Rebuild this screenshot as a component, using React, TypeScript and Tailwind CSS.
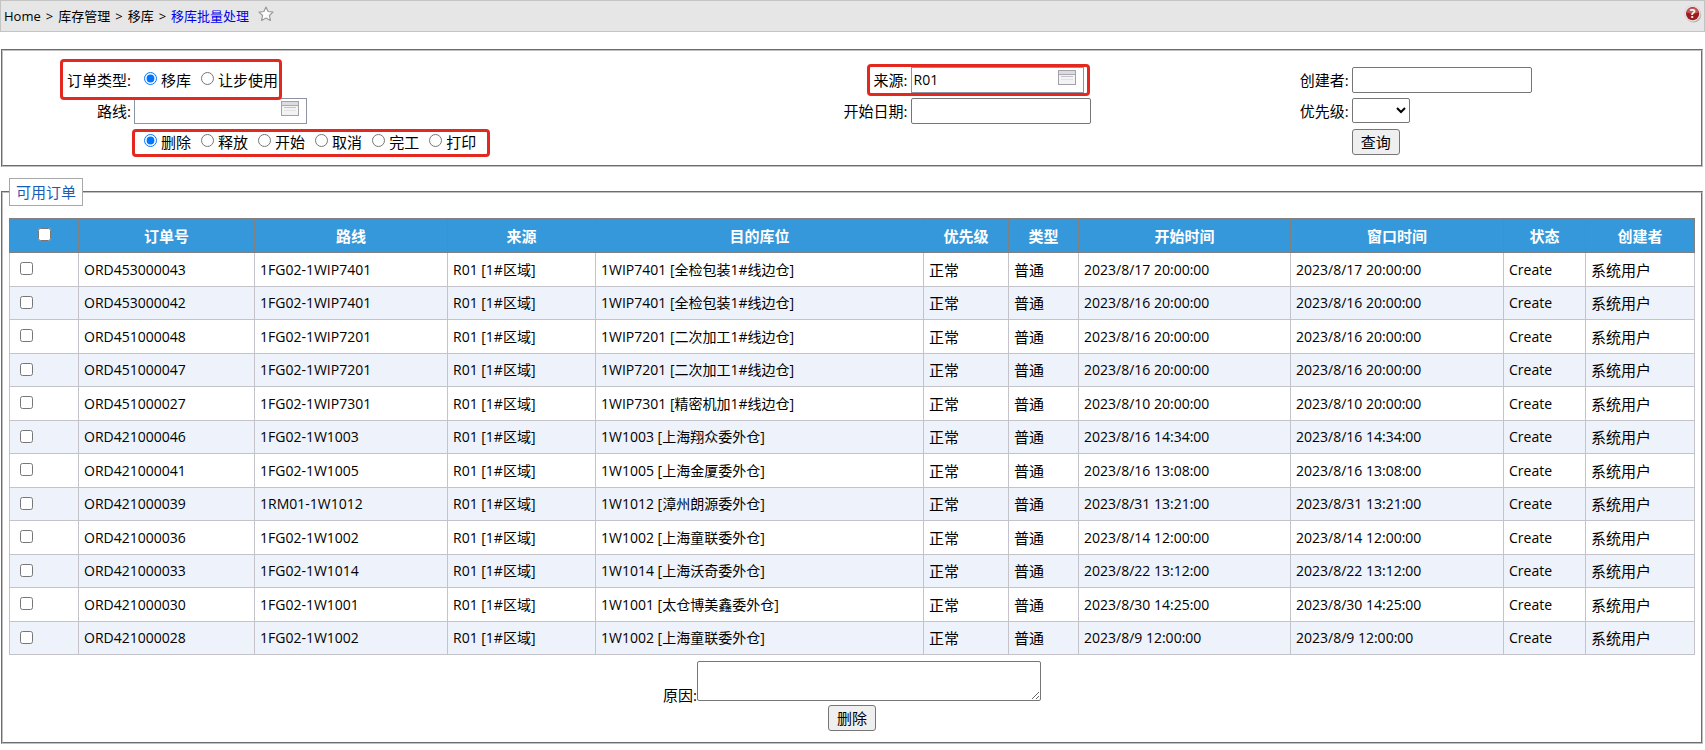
import React, { useState } from 'react';

interface Order {
  no: string;
  route: string;
  target: string;
  start: string;
  window: string;
}

const source = 'R01 [1#区域]';

const orders: Order[] = [
  { no: 'ORD453000043', route: '1FG02-1WIP7401', target: '1WIP7401 [全检包装1#线边仓]', start: '2023/8/17 20:00:00', window: '2023/8/17 20:00:00' },
  { no: 'ORD453000042', route: '1FG02-1WIP7401', target: '1WIP7401 [全检包装1#线边仓]', start: '2023/8/16 20:00:00', window: '2023/8/16 20:00:00' },
  { no: 'ORD451000048', route: '1FG02-1WIP7201', target: '1WIP7201 [二次加工1#线边仓]', start: '2023/8/16 20:00:00', window: '2023/8/16 20:00:00' },
  { no: 'ORD451000047', route: '1FG02-1WIP7201', target: '1WIP7201 [二次加工1#线边仓]', start: '2023/8/16 20:00:00', window: '2023/8/16 20:00:00' },
  { no: 'ORD451000027', route: '1FG02-1WIP7301', target: '1WIP7301 [精密机加1#线边仓]', start: '2023/8/10 20:00:00', window: '2023/8/10 20:00:00' },
  { no: 'ORD421000046', route: '1FG02-1W1003', target: '1W1003 [上海翔众委外仓]', start: '2023/8/16 14:34:00', window: '2023/8/16 14:34:00' },
  { no: 'ORD421000041', route: '1FG02-1W1005', target: '1W1005 [上海金厦委外仓]', start: '2023/8/16 13:08:00', window: '2023/8/16 13:08:00' },
  { no: 'ORD421000039', route: '1RM01-1W1012', target: '1W1012 [漳州朗源委外仓]', start: '2023/8/31 13:21:00', window: '2023/8/31 13:21:00' },
  { no: 'ORD421000036', route: '1FG02-1W1002', target: '1W1002 [上海童联委外仓]', start: '2023/8/14 12:00:00', window: '2023/8/14 12:00:00' },
  { no: 'ORD421000033', route: '1FG02-1W1014', target: '1W1014 [上海沃奇委外仓]', start: '2023/8/22 13:12:00', window: '2023/8/22 13:12:00' },
  { no: 'ORD421000030', route: '1FG02-1W1001', target: '1W1001 [太仓博美鑫委外仓]', start: '2023/8/30 14:25:00', window: '2023/8/30 14:25:00' },
  { no: 'ORD421000028', route: '1FG02-1W1002', target: '1W1002 [上海童联委外仓]', start: '2023/8/9 12:00:00', window: '2023/8/9 12:00:00' },
];

// The target column has no width and takes what is left
const columns = [
  { title: '订单号', width: 'w-[176px]' },
  { title: '路线', width: 'w-[193px]' },
  { title: '来源', width: 'w-[148px]' },
  { title: '目的库位', width: '' },
  { title: '优先级', width: 'w-[85px]' },
  { title: '类型', width: 'w-[70px]' },
  { title: '开始时间', width: 'w-[212px]' },
  { title: '窗口时间', width: 'w-[213px]' },
  { title: '状态', width: 'w-[82px]' },
  { title: '创建者', width: 'w-[109px]' },
];

const actions = ['删除', '释放', '开始', '取消', '完工', '打印'];

const inputClass = 'h-[26px] w-[180px] rounded-[2px] border border-[#767676] bg-white px-1 outline-none';
const buttonClass = 'rounded-[3px] border border-[#767676] bg-[#efefef] px-2 text-[15px] leading-6';
const labelClass = 'text-right text-[15px] whitespace-nowrap';
const cellClass = 'border border-[#c3c3c9] px-[5px]';

const StarIcon: React.FC = () => (
  <svg width="16" height="16" viewBox="0 0 16 16" aria-hidden="true">
    <path
      d="M8 1 L10.1 5.5 L15 6.1 L11.4 9.5 L12.4 14.5 L8 12 L3.6 14.5 L4.6 9.5 L1 6.1 L5.9 5.5 Z"
      fill="#fdfdfd"
      stroke="#9a9a9a"
      strokeWidth="1.2"
      strokeLinejoin="round"
    />
  </svg>
);

const HelpIcon: React.FC = () => (
  <svg width="18" height="18" viewBox="0 0 18 18" aria-hidden="true">
    <circle cx="9.6" cy="9.8" r="7.6" fill="#b5b5b5" />
    <circle cx="8.6" cy="8.6" r="7.8" fill="#f3eded" stroke="#c9c4c4" strokeWidth="0.6" />
    <circle cx="8.6" cy="8.6" r="6.6" fill="#9d1c20" />
    <path d="M2.6 7.6 A6.1 6.1 0 0 1 14.6 7.6 Q8.6 9.8 2.6 7.6 Z" fill="#c2555a" />
    <text x="8.6" y="13" textAnchor="middle" fontSize="12" fontWeight="700" fill="#fff">
      ?
    </text>
  </svg>
);

const PickerIcon: React.FC = () => (
  <svg width="18" height="15" viewBox="0 0 18 15" aria-hidden="true">
    <rect x="0.5" y="0.5" width="17" height="14" fill="#f3f3f5" stroke="#a3a1a8" />
    <rect x="1" y="1" width="16" height="3" fill="#dcdce0" />
    <path d="M1 4.5 H17" stroke="#aaa8b0" />
    <path d="M3 6.5 H15" stroke="#c4c3c9" />
    <path d="M3 9.5 H15" stroke="#e2e2e6" />
  </svg>
);

const PickerField: React.FC<{ id: string; value?: string }> = ({ id, value }) => (
  <div className="flex h-[26px] w-[173px] items-center border border-[#8b93a5] bg-white pr-[7px]">
    <input id={id} type="text" defaultValue={value} className="min-w-0 flex-1 bg-transparent px-[2px] outline-none" />
    <button type="button" aria-label="选择" className="-mt-1">
      <PickerIcon />
    </button>
  </div>
);

const RadioGroup: React.FC<{ name: string; options: string[] }> = ({ name, options }) => (
  <div className="flex items-center gap-[10px] pl-[13px] text-[15px]">
    {options.map((option, index) => (
      <label key={option} className="flex items-center gap-1 whitespace-nowrap">
        <input type="radio" name={name} defaultChecked={index === 0} className="mb-[2px] h-[13px] w-[13px]" />
        {option}
      </label>
    ))}
  </div>
);

const SearchForm: React.FC = () => (
  <form
    onSubmit={(e) => e.preventDefault()}
    className="mt-[17px] grid auto-rows-[31px] grid-cols-[128fr_644fr_132fr_309fr_132fr_352fr] items-center border-2 border-[#c0c0c0] pt-[13px] pb-2 [border-style:groove]"
  >
    <span className={labelClass}>订单类型:</span>
    <div className="relative flex h-full items-center">
      <RadioGroup name="orderType" options={['移库', '让步使用']} />
      <span className="pointer-events-none absolute -top-[5px] -left-[71px] h-[41px] w-[222px] rounded-[4px] border-3 border-[#e3281f]" />
    </div>
    <label htmlFor="source" className={labelClass}>来源:</label>
    <div className="relative flex h-full items-center pl-[3px]">
      <PickerField id="source" value="R01" />
      <span className="pointer-events-none absolute top-0 -left-[41px] h-8 w-[223px] rounded-[4px] border-3 border-[#e3281f]" />
    </div>
    <label htmlFor="creator" className={labelClass}>创建者:</label>
    <div className="flex pl-[3px]">
      <input id="creator" type="text" className={inputClass} />
    </div>

    <label htmlFor="route" className={labelClass}>路线:</label>
    <div className="flex pl-[3px]">
      <PickerField id="route" />
    </div>
    <label htmlFor="startDate" className={labelClass}>开始日期:</label>
    <div className="flex pl-[3px]">
      <input id="startDate" type="text" className={inputClass} />
    </div>
    <label htmlFor="priority" className={labelClass}>优先级:</label>
    <div className="flex pl-[3px]">
      <select id="priority" className="h-[25px] w-[58px] rounded-[2px] border border-[#767676] bg-white">
        <option value=""></option>
        <option>正常</option>
      </select>
    </div>

    <div className="relative col-start-2 flex h-full items-center">
      <RadioGroup name="action" options={actions} />
      <span className="pointer-events-none absolute top-[3px] left-[1px] h-7 w-[358px] rounded-[4px] border-3 border-[#e3281f]" />
    </div>
    <div className="col-start-6 flex pl-[3px]">
      <button type="submit" className={buttonClass}>查询</button>
    </div>
  </form>
);

export default function App() {
  const [selected, setSelected] = useState<string[]>([]);

  const toggle = (no: string) =>
    setSelected((prev) => (prev.includes(no) ? prev.filter((n) => n !== no) : [...prev, no]));

  return (
    <div className="min-h-screen bg-white font-['Open_Sans','Noto_Sans_CJK_SC',sans-serif] text-[14px] leading-5 text-black">
      <header className="flex h-8 items-center justify-between border border-[#c4c4c4] bg-[#e6e6e6] pr-[2px] pl-[3px]">
        <nav className="flex items-center gap-[5px] text-[13px]">
          <span>Home</span>
          <span>&gt;</span>
          <span>库存管理</span>
          <span>&gt;</span>
          <span>移库</span>
          <span>&gt;</span>
          <a href="#" className="text-[#0000ee]">移库批量处理</a>
          <button type="button" aria-label="收藏" className="mb-1 ml-1">
            <StarIcon />
          </button>
        </nav>
        <a href="#" aria-label="帮助" className="mb-1">
          <HelpIcon />
        </a>
      </header>

      <main className="pr-[2px] pl-[1px]">
        <SearchForm />

        <fieldset className="mt-[11px] min-w-0 border-2 border-[#c0c0c0] px-[6px] pt-3 pb-[11px] [border-style:groove]">
          <legend className="border border-[#a8a8a8] px-[6px] py-[3px] text-[15px] text-[#1a5cb8]">可用订单</legend>

          <table className="w-full table-fixed border-collapse">
            <thead>
              <tr className="h-[34px] bg-[#3498db] text-[15px] text-white">
                <th className="w-[69px] border border-[#808080]">
                  <input
                    type="checkbox"
                    aria-label="全选"
                    checked={selected.length === orders.length}
                    onChange={(e) => setSelected(e.target.checked ? orders.map((o) => o.no) : [])}
                    className="mx-auto mb-[2px] block h-[13px] w-[13px]"
                  />
                </th>
                {columns.map((column) => (
                  <th key={column.title} className={`border border-[#808080] font-bold ${column.width}`}>
                    {column.title}
                  </th>
                ))}
              </tr>
            </thead>
            <tbody>
              {orders.map((order) => (
                <tr key={order.no} className="odd:h-[34px] even:h-[33px] even:bg-[#eef2fb]">
                  <td className={cellClass}>
                    <input
                      type="checkbox"
                      aria-label={order.no}
                      checked={selected.includes(order.no)}
                      onChange={() => toggle(order.no)}
                      className="mb-[2px] ml-[5px] block h-[13px] w-[13px]"
                    />
                  </td>
                  <td className={cellClass}>{order.no}</td>
                  <td className={cellClass}>{order.route}</td>
                  <td className={cellClass}>{source}</td>
                  <td className={cellClass}>{order.target}</td>
                  <td className={`${cellClass} text-[15px]`}>正常</td>
                  <td className={`${cellClass} text-[15px]`}>普通</td>
                  <td className={cellClass}>{order.start}</td>
                  <td className={cellClass}>{order.window}</td>
                  <td className={cellClass}>Create</td>
                  <td className={`${cellClass} text-[15px]`}>系统用户</td>
                </tr>
              ))}
            </tbody>
          </table>

          <div className="mt-[6px] flex flex-col items-center">
            <div className="flex items-end">
              <label htmlFor="reason" className="text-[15px]">原因:</label>
              <textarea id="reason" className="mb-1 h-10 w-[344px] rounded-[2px] border border-[#767676] bg-white px-1 outline-none" />
            </div>
            <button type="button" className={buttonClass}>删除</button>
          </div>
        </fieldset>
      </main>
    </div>
  );
}
